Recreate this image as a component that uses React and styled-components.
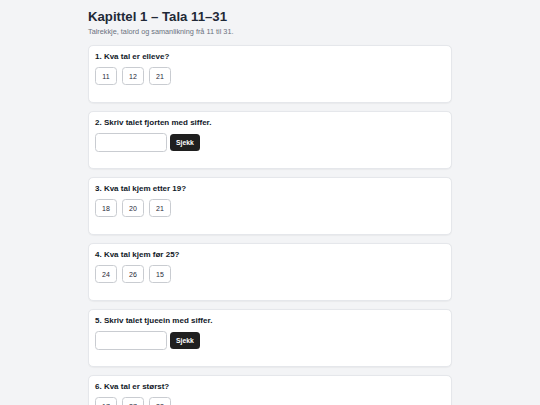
import styled, { createGlobalStyle } from 'styled-components'

let GlobalStyle = createGlobalStyle`
    html, body {
        margin:0;
        padding:0;
        background-color:#f3f4f6;
        font-family:"Liberation Sans", Arial, sans-serif;
        color:#1f2937;
    }
`

let Page = styled.main`
    width:364px;
    margin:0 auto;
    padding-top:9px;
`

let Title = styled.h1`
    margin:0;
    font-size:13.2px;
    line-height:15px;
    font-weight:700;
    color:#1f2937;
`

let Subtitle = styled.p`
    margin:4px 0 9px 0;
    font-size:7.3px;
    line-height:8.4px;
    color:#6b7280;
`

let QuestionList = styled.div`
    display:flex;
    flex-direction:column;
    gap:8px;
`

let Card = styled.section`
    background-color:white;
    border:1px solid #e5e7eb;
    border-radius:5px;
    box-shadow:0 0.5px 1px rgba(0,0,0,0.04);
    padding:6px 6px 7px 6px;
`

let Question = styled.p`
    margin:0 0 5px 0;
    font-size:8px;
    line-height:10px;
    font-weight:700;
    color:#111827;
`

let Options = styled.div`
    display:flex;
    gap:5px;
`

let OptionButton = styled.button`
    height:18px;
    min-width:22px;
    padding:0 6px;
    background-color:white;
    border:1px solid #c9ccd1;
    border-radius:3.5px;
    font-family:inherit;
    font-size:7px;
    color:#1f2937;
    cursor:pointer;
`

let AnswerRow = styled.div`
    display:flex;
    align-items:center;
    gap:3px;
    height:18px;
`

let AnswerInput = styled.input`
    box-sizing:border-box;
    width:72px;
    height:19px;
    border:1px solid #c9ccd1;
    border-radius:3.5px;
    padding:0 5px;
    font-family:inherit;
    font-size:7px;
    outline:none;
`

let CheckButton = styled.button`
    height:17px;
    padding:0 6px;
    background-color:#1f1f1f;
    border:none;
    border-radius:3.5px;
    color:white;
    font-family:inherit;
    font-size:6.8px;
    font-weight:700;
    cursor:pointer;
`

let Feedback = styled.div`
    min-height:8px;
    margin-top:2px;
`

let questions = [
    {key:1, text:'1. Kva tal er elleve?', options:['11', '12', '21']},
    {key:2, text:'2. Skriv talet fjorten med siffer.', input:true},
    {key:3, text:'3. Kva tal kjem etter 19?', options:['18', '20', '21']},
    {key:4, text:'4. Kva tal kjem før 25?', options:['24', '26', '15']},
    {key:5, text:'5. Skriv talet tjueein med siffer.', input:true},
    {key:6, text:'6. Kva tal er størst?', options:['17', '27', '22']},
]

export default function App() {
    return(
        <Page>
            <GlobalStyle />
            <Title>Kapittel 1 – Tala 11–31</Title>
            <Subtitle>Talrekkje, talord og samanlikning frå 11 til 31.</Subtitle>

            <QuestionList>
                {questions.map(q =>
                <Card key={q.key}>
                    <Question>{q.text}</Question>
                    {q.input ? (
                        <AnswerRow>
                            <AnswerInput type="text" />
                            <CheckButton>Sjekk</CheckButton>
                        </AnswerRow>
                    ) : (
                        <Options>
                            {q.options.map(option =>
                            <OptionButton key={option}>{option}</OptionButton>
                            )}
                        </Options>
                    )}
                    <Feedback></Feedback>
                </Card>
                )}
            </QuestionList>
        </Page>
    )
}
